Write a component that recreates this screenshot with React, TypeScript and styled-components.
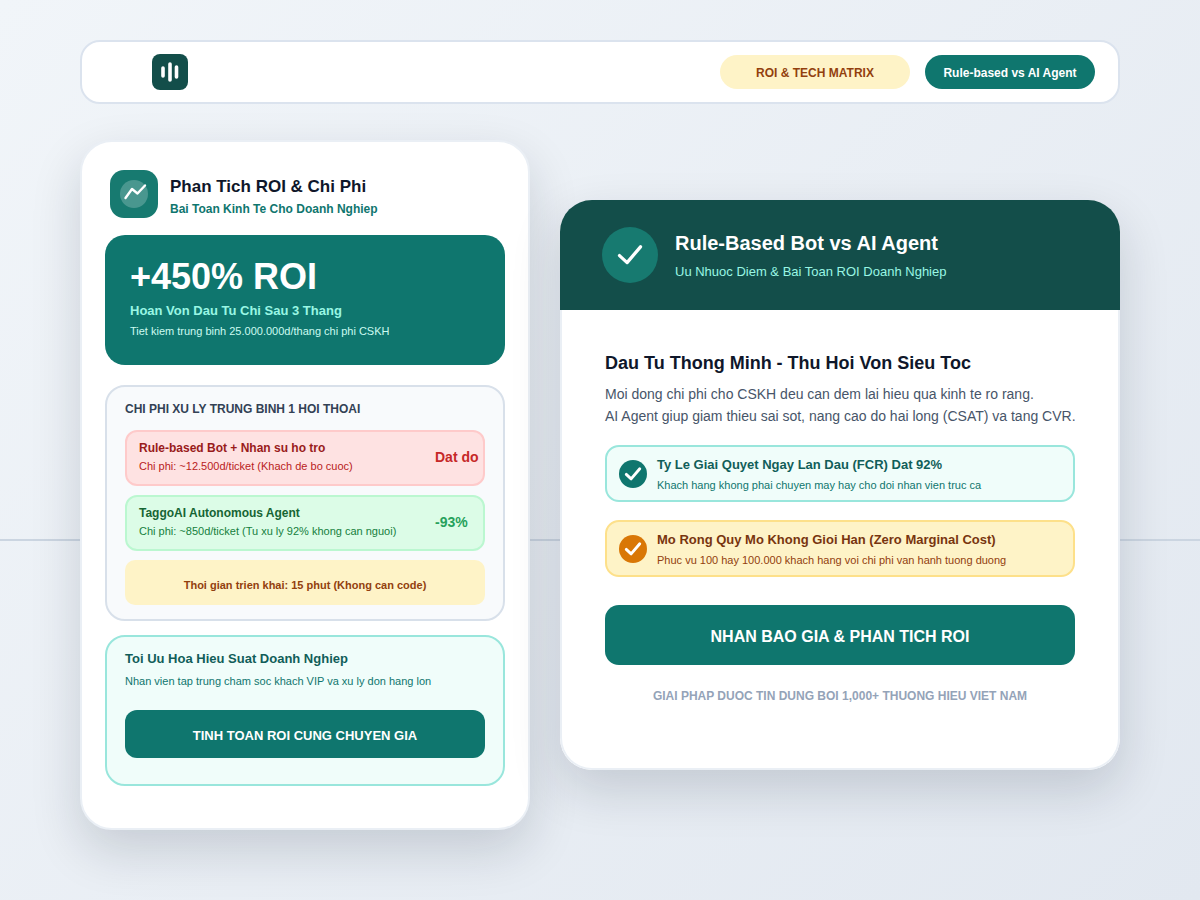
import { createGlobalStyle, styled } from 'styled-components';

const GlobalStyle = createGlobalStyle`
  * {
    box-sizing: border-box;
  }

  html,
  body {
    margin: 0;
    padding: 0;
    height: 100%;
    overflow: hidden;
  }

  body {
    font-family: 'Liberation Sans', Arial, sans-serif;
  }
`;

const LogoIcon = () => (
  <svg width="22" height="22" viewBox="0 0 22 22" fill="none" stroke="#fff" strokeWidth="3.6" strokeLinecap="round">
    <path d="M4 7v8M11 3v16M17.5 6v10" />
  </svg>
);

const TrendIcon = () => (
  <svg width="28" height="28" viewBox="0 0 28 28" fill="none">
    <circle cx="14" cy="14" r="14" fill="#fff" fillOpacity="0.22" />
    <path d="M5.5 18 12 9l5.5 4.5L25 5.5" stroke="#fff" strokeWidth="2.4" strokeLinecap="round" strokeLinejoin="round" />
  </svg>
);

const CheckIcon: React.FC<{ size: number; weight: number }> = ({ size, weight }) => (
  <svg width={size} height={size} viewBox="0 0 24 24" fill="none" stroke="#fff" strokeWidth={weight} strokeLinecap="round" strokeLinejoin="round">
    <path d="M3 12.5 9.5 18.5 21 5" />
  </svg>
);

const App = () => {
  return (
    <StPage>
      <GlobalStyle />
      <StNav>
        <StLogo>
          <LogoIcon />
        </StLogo>
        <StNavActions>
          <StPill $tone="amber">ROI &amp; TECH MATRIX</StPill>
          <StPill $tone="teal">Rule-based vs AI Agent</StPill>
        </StNavActions>
      </StNav>

      <StColumns>
        <StLeftCard>
          <StCardHeader>
            <StAppIcon>
              <TrendIcon />
            </StAppIcon>
            <StCardHeading>
              <StCardTitle>Phan Tich ROI &amp; Chi Phi</StCardTitle>
              <StCardSubtitle>Bai Toan Kinh Te Cho Doanh Nghiep</StCardSubtitle>
            </StCardHeading>
          </StCardHeader>

          <StHero>
            <StHeroValue>+450% ROI</StHeroValue>
            <StHeroLabel>Hoan Von Dau Tu Chi Sau 3 Thang</StHeroLabel>
            <StHeroNote>Tiet kiem trung binh 25.000.000d/thang chi phi CSKH</StHeroNote>
          </StHero>

          <StCostBox>
            <StCostHeading>CHI PHI XU LY TRUNG BINH 1 HOI THOAI</StCostHeading>
            <StCostRow $tone="red">
              <div>
                <StCostName $tone="red">Rule-based Bot + Nhan su ho tro</StCostName>
                <StCostDetail $tone="red">Chi phi: ~12.500d/ticket (Khach de bo cuoc)</StCostDetail>
              </div>
              <StCostBadge $tone="red">Dat do</StCostBadge>
            </StCostRow>
            <StCostRow $tone="green">
              <div>
                <StCostName $tone="green">TaggoAI Autonomous Agent</StCostName>
                <StCostDetail $tone="green">Chi phi: ~850d/ticket (Tu xu ly 92% khong can nguoi)</StCostDetail>
              </div>
              <StCostBadge $tone="green">-93%</StCostBadge>
            </StCostRow>
            <StDeployNote>Thoi gian trien khai: 15 phut (Khong can code)</StDeployNote>
          </StCostBox>

          <StOptimizeBox>
            <StOptimizeTitle>Toi Uu Hoa Hieu Suat Doanh Nghiep</StOptimizeTitle>
            <StOptimizeText>Nhan vien tap trung cham soc khach VIP va xu ly don hang lon</StOptimizeText>
            <StSmallButton>TINH TOAN ROI CUNG CHUYEN GIA</StSmallButton>
          </StOptimizeBox>
        </StLeftCard>

        <StRightCard>
          <StBanner>
            <StBannerIcon>
              <CheckIcon size={28} weight={2.8} />
            </StBannerIcon>
            <div>
              <StBannerTitle>Rule-Based Bot vs AI Agent</StBannerTitle>
              <StBannerSubtitle>Uu Nhuoc Diem &amp; Bai Toan ROI Doanh Nghiep</StBannerSubtitle>
            </div>
          </StBanner>

          <StRightBody>
            <StLeadTitle>Dau Tu Thong Minh - Thu Hoi Von Sieu Toc</StLeadTitle>
            <StLeadText>
              Moi dong chi phi cho CSKH deu can dem lai hieu qua kinh te ro rang.
              <br />
              AI Agent giup giam thieu sai sot, nang cao do hai long (CSAT) va tang CVR.
            </StLeadText>

            <StFeature $tone="teal">
              <StFeatureCheck $tone="teal">
                <CheckIcon size={18} weight={3.8} />
              </StFeatureCheck>
              <StFeatureBody>
                <StFeatureTitle $tone="teal">Ty Le Giai Quyet Ngay Lan Dau (FCR) Dat 92%</StFeatureTitle>
                <StFeatureText $tone="teal">Khach hang khong phai chuyen may hay cho doi nhan vien truc ca</StFeatureText>
              </StFeatureBody>
            </StFeature>

            <StFeature $tone="amber">
              <StFeatureCheck $tone="amber">
                <CheckIcon size={18} weight={3.8} />
              </StFeatureCheck>
              <StFeatureBody>
                <StFeatureTitle $tone="amber">Mo Rong Quy Mo Khong Gioi Han (Zero Marginal Cost)</StFeatureTitle>
                <StFeatureText $tone="amber">Phuc vu 100 hay 100.000 khach hang voi chi phi van hanh tuong duong</StFeatureText>
              </StFeatureBody>
            </StFeature>

            <StLargeButton>NHAN BAO GIA &amp; PHAN TICH ROI</StLargeButton>
            <StTrustLine>GIAI PHAP DUOC TIN DUNG BOI 1,000+ THUONG HIEU VIET NAM</StTrustLine>
          </StRightBody>
        </StRightCard>
      </StColumns>
    </StPage>
  );
};

const costTones = {
  red: { bg: '#fee2e2', border: '#fecaca', name: '#991b1b', detail: '#b91c1c', badge: '#c62828' },
  green: { bg: '#dcfce7', border: '#bbf7d0', name: '#166534', detail: '#15803d', badge: '#27a15c' },
};

const featureTones = {
  teal: { bg: '#f0fdfa', border: '#99e6dc', title: '#115e59', text: '#0f766e', check: '#0f766e' },
  amber: { bg: '#fef3c7', border: '#fde08a', title: '#78350f', text: '#92400e', check: '#d97706' },
};

const StPage = styled.div`
  position: relative;
  width: 1200px;
  height: 900px;
  padding: 40px 80px;
  background: linear-gradient(135deg, #f1f5f9 0%, #e2e8f0 100%);

  &::before {
    content: '';
    position: absolute;
    left: 0;
    right: 0;
    top: 539px;
    height: 2px;
    background: #cbd5e1;
  }
`;

const StNav = styled.header`
  position: relative;
  display: flex;
  align-items: center;
  justify-content: space-between;
  height: 64px;
  padding: 0 23px 0 70px;
  background: #ffffff;
  border: 2px solid #dbe3ee;
  border-radius: 20px;
`;

const StLogo = styled.div`
  display: flex;
  align-items: center;
  justify-content: center;
  width: 36px;
  height: 36px;
  background: #134e4a;
  border-radius: 8px;
`;

const StNavActions = styled.div`
  display: flex;
  gap: 15px;
`;

const StPill = styled.div<{ $tone: 'amber' | 'teal' }>`
  display: flex;
  align-items: center;
  justify-content: center;
  width: ${({ $tone }) => ($tone === 'amber' ? '190px' : '170px')};
  height: 34px;
  padding-top: 2px;
  border-radius: 17px;
  font-size: 12px;
  font-weight: 700;
  background: ${({ $tone }) => ($tone === 'amber' ? '#fef3c7' : '#0f766e')};
  color: ${({ $tone }) => ($tone === 'amber' ? '#92400e' : '#ffffff')};
`;

const StColumns = styled.div`
  position: relative;
  display: flex;
  align-items: flex-start;
  gap: 30px;
  margin-top: 36px;
`;

const StLeftCard = styled.section`
  display: flex;
  flex-direction: column;
  width: 450px;
  height: 690px;
  padding: 28px 23px 0;
  background: #ffffff;
  border: 2px solid #eaeff5;
  border-radius: 32px;
  box-shadow: 0 20px 50px rgba(15, 23, 42, 0.16);
`;

const StCardHeader = styled.div`
  display: flex;
  align-items: center;
  gap: 12px;
  padding-left: 5px;
`;

const StAppIcon = styled.div`
  display: flex;
  align-items: center;
  justify-content: center;
  width: 48px;
  height: 48px;
  background: #177a70;
  border-radius: 14px;
`;

const StCardHeading = styled.div`
  padding-top: 4px;
`;

const StCardTitle = styled.div`
  font-size: 17px;
  line-height: 20px;
  font-weight: 700;
  color: #0f172a;
`;

const StCardSubtitle = styled.div`
  margin-top: 5px;
  font-size: 12px;
  line-height: 14px;
  font-weight: 700;
  color: #0f766e;
`;

const StHero = styled.div`
  height: 130px;
  margin-top: 17px;
  padding: 21px 25px;
  background: #0f766e;
  border-radius: 20px;
`;

const StHeroValue = styled.div`
  font-size: 36px;
  line-height: 42px;
  font-weight: 700;
  color: #ffffff;
`;

const StHeroLabel = styled.div`
  margin-top: 5px;
  font-size: 13px;
  line-height: 16px;
  font-weight: 700;
  color: #99f6e4;
`;

const StHeroNote = styled.div`
  margin-top: 6px;
  font-size: 11px;
  line-height: 13px;
  color: #ccfbf1;
`;

const StCostBox = styled.div`
  display: flex;
  flex-direction: column;
  height: 236px;
  margin-top: 20px;
  padding: 14px 18px;
  background: #f8fafc;
  border: 2px solid #d8e0ea;
  border-radius: 20px;
`;

const StCostHeading = styled.div`
  font-size: 12px;
  line-height: 16px;
  font-weight: 700;
  color: #334155;
`;

const StCostRow = styled.div<{ $tone: 'red' | 'green' }>`
  display: flex;
  align-items: center;
  justify-content: space-between;
  height: 56px;
  margin-top: 13px;
  padding: 0 4px 2px 12px;
  background: ${({ $tone }) => costTones[$tone].bg};
  border: 2px solid ${({ $tone }) => costTones[$tone].border};
  border-radius: 12px;

  & + & {
    margin-top: 9px;
  }
`;

const StCostName = styled.div<{ $tone: 'red' | 'green' }>`
  font-size: 12px;
  line-height: 14px;
  font-weight: 700;
  color: ${({ $tone }) => costTones[$tone].name};
`;

const StCostDetail = styled.div<{ $tone: 'red' | 'green' }>`
  margin-top: 5px;
  font-size: 11px;
  line-height: 13px;
  color: ${({ $tone }) => costTones[$tone].detail};
`;

const StCostBadge = styled.div<{ $tone: 'red' | 'green' }>`
  width: 44px;
  font-size: 14px;
  font-weight: 700;
  white-space: nowrap;
  color: ${({ $tone }) => costTones[$tone].badge};
`;

const StDeployNote = styled.div`
  display: flex;
  align-items: center;
  justify-content: center;
  height: 45px;
  margin-top: 9px;
  padding-top: 4px;
  background: #fef3c7;
  border-radius: 10px;
  font-size: 11px;
  font-weight: 700;
  color: #92400e;
`;

const StOptimizeBox = styled.div`
  height: 151px;
  margin-top: 14px;
  padding: 14px 18px;
  background: #f0fdfa;
  border: 2px solid #99e6dc;
  border-radius: 20px;
`;

const StOptimizeTitle = styled.div`
  font-size: 13px;
  line-height: 16px;
  font-weight: 700;
  color: #115e59;
`;

const StOptimizeText = styled.div`
  margin-top: 8px;
  font-size: 11px;
  line-height: 13px;
  color: #0f766e;
`;

const StSmallButton = styled.div`
  display: flex;
  align-items: center;
  justify-content: center;
  height: 48px;
  margin-top: 22px;
  padding-top: 2px;
  background: #0f766e;
  border-radius: 12px;
  font-size: 13px;
  font-weight: 700;
  color: #ffffff;
`;

const StRightCard = styled.section`
  width: 560px;
  height: 570px;
  margin-top: 60px;
  overflow: hidden;
  background: #ffffff;
  border-radius: 32px;
  box-shadow: 0 20px 50px rgba(15, 23, 42, 0.16);
`;

const StBanner = styled.div`
  display: flex;
  align-items: center;
  gap: 17px;
  height: 110px;
  padding: 0 42px;
  background: #134e4a;
`;

const StBannerIcon = styled.div`
  display: flex;
  align-items: center;
  justify-content: center;
  width: 56px;
  height: 56px;
  background: #177a70;
  border-radius: 50%;
`;

const StBannerTitle = styled.div`
  font-size: 20px;
  line-height: 24px;
  font-weight: 700;
  color: #ffffff;
`;

const StBannerSubtitle = styled.div`
  margin-top: 9px;
  font-size: 13px;
  line-height: 15px;
  color: #99f6e4;
`;

const StRightBody = styled.div`
  height: 460px;
  padding: 42px 43px 0;
  border: 2px solid #eaeff5;
  border-top: none;
  border-radius: 0 0 32px 32px;
`;

const StLeadTitle = styled.div`
  font-size: 18px;
  line-height: 22px;
  font-weight: 700;
  color: #0f172a;
`;

const StLeadText = styled.div`
  margin-top: 9px;
  font-size: 14px;
  line-height: 22px;
  white-space: nowrap;
  color: #475569;
`;

const StFeature = styled.div<{ $tone: 'teal' | 'amber' }>`
  display: flex;
  align-items: center;
  gap: 10px;
  height: 57px;
  margin-top: 18px;
  padding: 0 12px;
  background: ${({ $tone }) => featureTones[$tone].bg};
  border: 2px solid ${({ $tone }) => featureTones[$tone].border};
  border-radius: 14px;
`;

const StFeatureCheck = styled.div<{ $tone: 'teal' | 'amber' }>`
  display: flex;
  align-items: center;
  justify-content: center;
  flex-shrink: 0;
  width: 28px;
  height: 28px;
  background: ${({ $tone }) => featureTones[$tone].check};
  border-radius: 50%;
`;

const StFeatureBody = styled.div`
  padding-top: 2px;
`;

const StFeatureTitle = styled.div<{ $tone: 'teal' | 'amber' }>`
  font-size: 13px;
  line-height: 15px;
  font-weight: 700;
  color: ${({ $tone }) => featureTones[$tone].title};
`;

const StFeatureText = styled.div<{ $tone: 'teal' | 'amber' }>`
  margin-top: 7px;
  font-size: 11px;
  line-height: 13px;
  color: ${({ $tone }) => featureTones[$tone].text};
`;

const StLargeButton = styled.div`
  display: flex;
  align-items: center;
  justify-content: center;
  height: 60px;
  margin-top: 28px;
  padding-top: 3px;
  background: #0f766e;
  border-radius: 14px;
  font-size: 16px;
  font-weight: 700;
  color: #ffffff;
`;

const StTrustLine = styled.div`
  margin-top: 24px;
  font-size: 12px;
  line-height: 14px;
  font-weight: 700;
  text-align: center;
  color: #94a3b8;
`;

export default App;
